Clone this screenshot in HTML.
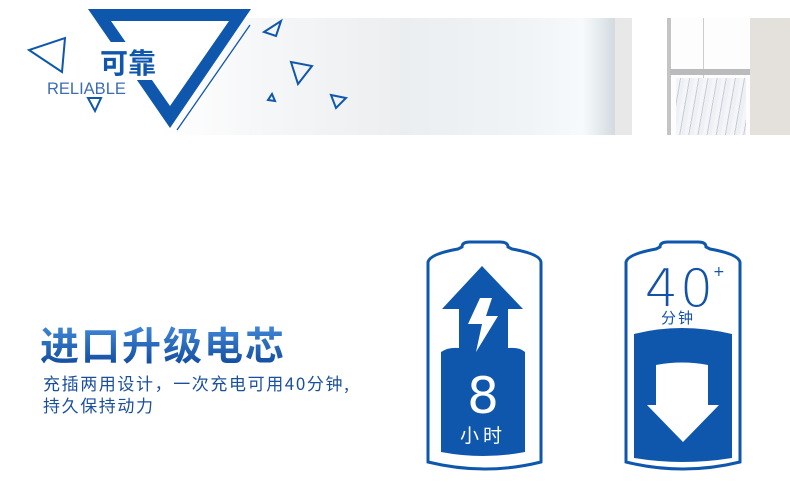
<!DOCTYPE html>
<html><head><meta charset="utf-8"><style>
body{margin:0;width:790px;height:504px;background:#fff;position:relative;overflow:hidden;font-family:"Liberation Sans","Noto Sans CJK SC",sans-serif}
.a{position:absolute}
</style></head><body>
<div class="a" style="left:160px;top:18px;width:240px;height:117px;background:linear-gradient(90deg,#fff 0%,#f6f7f8 40%,#eceef0 100%)"></div>
<div class="a" style="left:400px;top:18px;width:215px;height:117px;background:linear-gradient(90deg,#ebeef0,#f0f4f7 60%,#f7fafc 85%,#d3dbe0)"></div>
<div class="a" style="left:615px;top:18px;width:17px;height:117px;background:#e8e8e8"></div>
<div class="a" style="left:667px;top:18px;width:83px;height:117px;background:#fdfdfd"></div>
<div class="a" style="left:667px;top:18px;width:4px;height:117px;background:#c4c4c4"></div>
<div class="a" style="left:703px;top:18px;width:1px;height:117px;background:#ccc"></div>
<div class="a" style="left:670px;top:69px;width:80px;height:6px;background:#b9bbbd"></div>
<div class="a" style="left:676px;top:78px;width:70px;height:57px;background:repeating-linear-gradient(100deg,#f4f5f8 0 4px,#c7ccd6 4px 5px,#eef0f4 5px 9px)"></div>
<div class="a" style="left:750px;top:18px;width:40px;height:117px;background:#e4e0dc"></div>
<svg class="a" style="left:0;top:0" width="400" height="140">
<polygon points="88,9 251,9 170,128" fill="#0f57ac"/>
<polygon points="111,21 229,21 170,106" fill="#fff"/>
<line x1="250" y1="25" x2="177" y2="130" stroke="#0f57ac" stroke-width="1.3"/>
<polygon points="65,38 62,72 29,50" fill="none" stroke="#0f57ac" stroke-width="2"/>
<polygon points="88,98 101,98 95,111" fill="none" stroke="#0f57ac" stroke-width="2"/>
<polygon points="281,21 276,36 264,32" fill="none" stroke="#0f57ac" stroke-width="2"/>
<polygon points="291,62 312,66 298,84" fill="none" stroke="#0f57ac" stroke-width="2"/>
<polygon points="272,94 275,101 268,100" fill="none" stroke="#0f57ac" stroke-width="2"/>
<polygon points="331,95 346,98 336,108" fill="none" stroke="#0f57ac" stroke-width="2"/>
<rect x="96" y="42" width="62" height="38" fill="#fff"/>
<text x="100" y="73" font-size="28" font-weight="bold" fill="#0f57ac" font-family="Noto Sans CJK SC">可靠</text>
<text x="47" y="94" font-size="16.5" fill="#3b6db5" font-family="Liberation Sans">RELIABLE</text>
</svg>
<div class="a" style="left:40px;top:319px;font-size:39px;font-weight:bold;line-height:50px;background:linear-gradient(#4a90e0,#0d4799);-webkit-background-clip:text;color:transparent;font-family:'Noto Sans CJK SC',sans-serif;letter-spacing:2px">进口升级电芯</div>
<div class="a" style="left:43px;top:372px;font-size:17px;line-height:22px;color:#1a4f9c;font-family:'Noto Sans CJK SC',sans-serif;letter-spacing:1.6px">充插两用设计，一次充电可用40分钟,<br>持久保持动力</div>
<svg class="a" style="left:410px;top:230px" width="340" height="250">
<g fill="none" stroke="#0f57ac" stroke-width="3">
<path d="M18,32 Q20,24 48,19 L52,17 Q52,12 60,12 L90,12 Q98,12 98,17 L102,19 Q130,24 131,32 L131,232 Q75,246 18,232 Z"/>
<path d="M216,32 Q218,24 246,19 L250,17 Q250,12 258,12 L288,12 Q296,12 296,17 L300,19 Q328,24 330,32 L330,232 Q273,246 216,232 Z"/>
</g>
<path d="M72,36 L113,79 L98,79 L98,118 Q110,117 115,122 L115,222 Q73,230 31,222 L31,122 Q38,117 49,118 L49,79 L32,79 Z" fill="#0f57ac"/>
<path d="M70,68 L82,68 L76,86 L88,86 L66,122 L72,94 L58,94 Z" fill="#fff"/>
<text x="73" y="183" font-size="50" fill="#fff" text-anchor="middle" font-family="DejaVu Sans">8</text>
<text x="73" y="212" font-size="19" fill="#fff" text-anchor="middle" font-family="Noto Sans CJK SC" letter-spacing="4">小时</text>
<path d="M224,104 Q271,92 322,104 L322,228 Q272,236 224,228 Z" fill="#0f57ac"/>
<path d="M246,135 Q272,130 298,135 L298,175 L309,175 L273,212 L237,175 L246,175 Z" fill="#fff"/>
<text x="270" y="76" font-size="52" fill="#1352a8" text-anchor="middle" font-family="DejaVu Sans" font-weight="200" letter-spacing="2">40</text>
<text x="303" y="46" font-size="14" fill="#1352a8" font-family="DejaVu Sans">+</text>
<text x="268" y="93" font-size="15" fill="#1352a8" text-anchor="middle" font-family="Noto Sans CJK SC" letter-spacing="2">分钟</text>
</svg>
</body></html>
